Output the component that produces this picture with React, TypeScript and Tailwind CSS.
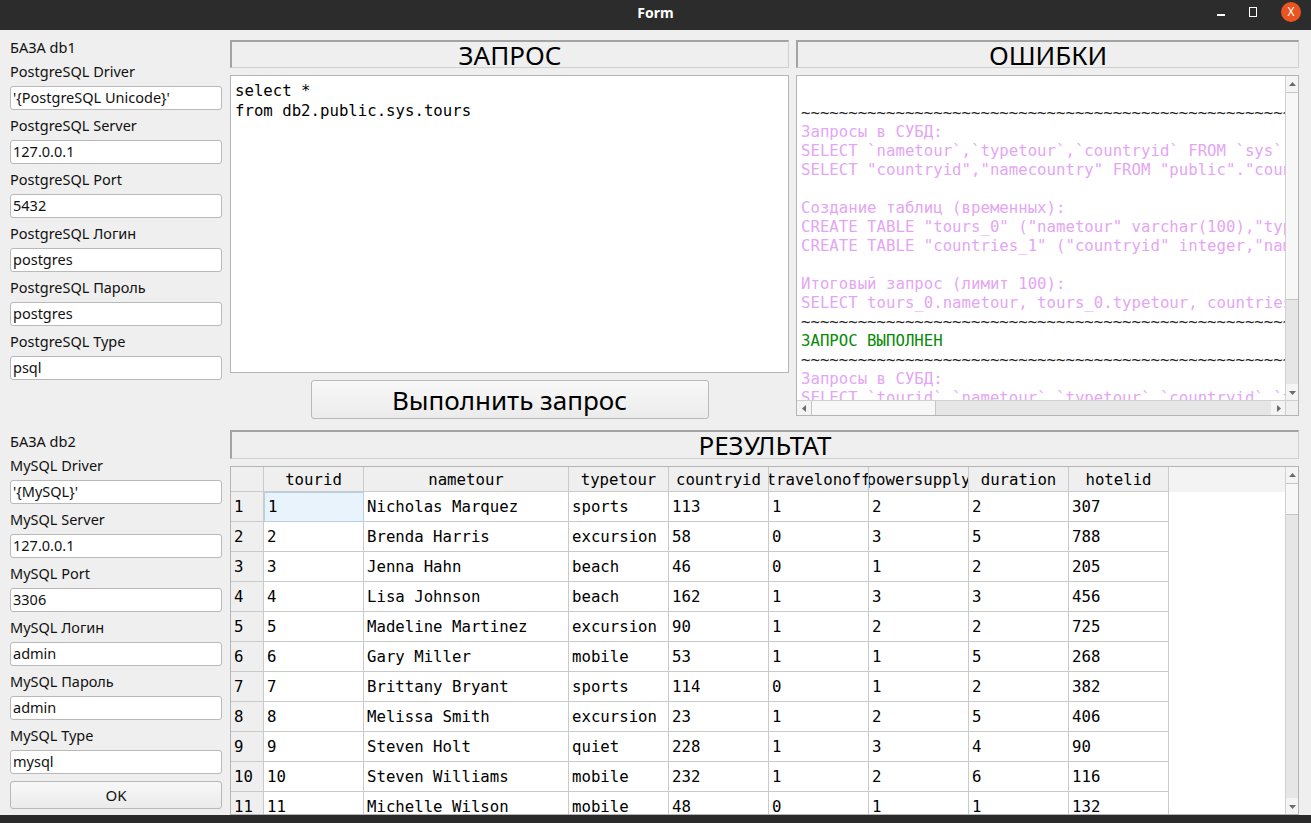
import React from "react";

const ui = "font-['Noto_Sans',sans-serif]";
const mono = "font-['DejaVu_Sans_Mono',monospace]";

type Field = { label: string; value: string };

const db1: Field[] = [
  { label: "PostgreSQL Driver", value: "'{PostgreSQL Unicode}'" },
  { label: "PostgreSQL Server", value: "127.0.0.1" },
  { label: "PostgreSQL Port", value: "5432" },
  { label: "PostgreSQL Логин", value: "postgres" },
  { label: "PostgreSQL Пароль", value: "postgres" },
  { label: "PostgreSQL Type", value: "psql" },
];

const db2: Field[] = [
  { label: "MySQL Driver", value: "'{MySQL}'" },
  { label: "MySQL Server", value: "127.0.0.1" },
  { label: "MySQL Port", value: "3306" },
  { label: "MySQL Логин", value: "admin" },
  { label: "MySQL Пароль", value: "admin" },
  { label: "MySQL Type", value: "mysql" },
];

const columns = [
  { name: "tourid", w: "w-[100px]" },
  { name: "nametour", w: "w-[205px]" },
  { name: "typetour", w: "w-[100px]" },
  { name: "countryid", w: "w-[100px]" },
  { name: "travelonoff", w: "w-[100px]" },
  { name: "powersupply", w: "w-[100px]" },
  { name: "duration", w: "w-[100px]" },
  { name: "hotelid", w: "w-[100px]" },
];

const rows: string[][] = [
  ["1", "Nicholas Marquez", "sports", "113", "1", "2", "2", "307"],
  ["2", "Brenda Harris", "excursion", "58", "0", "3", "5", "788"],
  ["3", "Jenna Hahn", "beach", "46", "0", "1", "2", "205"],
  ["4", "Lisa Johnson", "beach", "162", "1", "3", "3", "456"],
  ["5", "Madeline Martinez", "excursion", "90", "1", "2", "2", "725"],
  ["6", "Gary Miller", "mobile", "53", "1", "1", "5", "268"],
  ["7", "Brittany Bryant", "sports", "114", "0", "1", "2", "382"],
  ["8", "Melissa Smith", "excursion", "23", "1", "2", "5", "406"],
  ["9", "Steven Holt", "quiet", "228", "1", "3", "4", "90"],
  ["10", "Steven Williams", "mobile", "232", "1", "2", "6", "116"],
  ["11", "Michelle Wilson", "mobile", "48", "0", "1", "1", "132"],
];

const tildes = "~".repeat(80);

const log: { text: string; tone: "pink" | "black" | "green" }[] = [
  { text: " ", tone: "black" },
  { text: tildes, tone: "black" },
  { text: "Запросы в СУБД:", tone: "pink" },
  { text: "SELECT `nametour`,`typetour`,`countryid` FROM `sys`.`tours`", tone: "pink" },
  { text: 'SELECT "countryid","namecountry" FROM "public"."countries"', tone: "pink" },
  { text: " ", tone: "black" },
  { text: "Создание таблиц (временных):", tone: "pink" },
  { text: 'CREATE TABLE "tours_0" ("nametour" varchar(100),"typetour" varchar(100))', tone: "pink" },
  { text: 'CREATE TABLE "countries_1" ("countryid" integer,"namecountry" varchar(100))', tone: "pink" },
  { text: " ", tone: "black" },
  { text: "Итоговый запрос (лимит 100):", tone: "pink" },
  { text: "SELECT tours_0.nametour, tours_0.typetour, countries_1.namecountry FROM tours_0", tone: "pink" },
  { text: tildes, tone: "black" },
  { text: "ЗАПРОС ВЫПОЛНЕН", tone: "green" },
  { text: tildes, tone: "black" },
  { text: "Запросы в СУБД:", tone: "pink" },
  { text: "SELECT `tourid`,`nametour`,`typetour`,`countryid`,`travelonoff` FROM `sys`", tone: "pink" },
];

function Arrow({ dir }: { dir: "up" | "down" | "left" | "right" }) {
  const pts = {
    up: "1,6 4.5,2 8,6",
    down: "1,3 4.5,7 8,3",
    left: "6,1 2,4.5 6,8",
    right: "3,1 7,4.5 3,8",
  }[dir];
  return (
    <svg width="9" height="9" viewBox="0 0 9 9">
      <polygon points={pts} fill="#6b6b6b" />
    </svg>
  );
}

function FieldGroup({ title, fields }: { title: string; fields: Field[] }) {
  return (
    <div className="flex flex-col">
      <div className="flex h-[24px] items-center">{title}</div>
      {fields.map((f, i) => (
        <div key={f.label} className={i === 0 ? "flex flex-col" : "mt-[4px] flex flex-col"}>
          <div className="flex h-[24px] items-center">{f.label}</div>
          <div className="mt-[2px] flex h-[24px] items-center rounded-[3px] border border-[#b9b9b9] bg-white px-[2px]">
            {f.value}
          </div>
        </div>
      ))}
    </div>
  );
}

function Caption({ text, className }: { text: string; className?: string }) {
  return (
    <div
      className={`flex items-center justify-center border-t-2 border-l-2 border-b border-r border-t-[#a3a3a3] border-l-[#a3a3a3] border-b-[#cfcfcf] border-r-[#cfcfcf] bg-[#efefef] text-[26px] leading-none text-black ${className ?? ""}`}
    >
      {text}
    </div>
  );
}

function ErrorsPanel() {
  return (
    <div className="flex h-[341px] flex-col border border-[#b4b4b4] bg-white">
      <div className="flex min-h-0 flex-1">
        <div className={`${mono} min-w-0 flex-1 overflow-hidden whitespace-pre pl-[4px] pt-[8px] text-[15.7px] leading-[19px]`}>
          {log.map((l, i) => (
            <div
              key={i}
              className={
                l.tone === "pink" ? "text-[#e4a6f4]" : l.tone === "green" ? "text-[#078a07]" : "text-[#222222]"
              }
            >
              {l.text}
            </div>
          ))}
        </div>
        <div className="flex w-[13px] flex-col border-l border-[#d0d0d0] bg-[#e6e6e6]">
          <div className="flex h-[16px] items-center justify-center bg-[#f4f4f4]">
            <Arrow dir="up" />
          </div>
          <div className="h-[208px] border-y border-[#c6c6c6] bg-[#f7f7f7]" />
          <div className="flex-1" />
          <div className="flex h-[16px] items-center justify-center bg-[#f4f4f4]">
            <Arrow dir="down" />
          </div>
        </div>
      </div>
      <div className="flex h-[15px] border-t border-[#d0d0d0]">
        <div className="flex flex-1 bg-[#e6e6e6]">
          <div className="flex w-[14px] items-center justify-center bg-[#f4f4f4]">
            <Arrow dir="left" />
          </div>
          <div className="w-[125px] border-x border-[#c6c6c6] bg-[#f7f7f7]" />
          <div className="flex-1" />
          <div className="flex w-[14px] items-center justify-center bg-[#f4f4f4]">
            <Arrow dir="right" />
          </div>
        </div>
        <div className="w-[13px] border-l border-[#d0d0d0] bg-[#efefef]" />
      </div>
    </div>
  );
}

function ResultTable() {
  return (
    <div className={`${mono} flex min-h-0 flex-1 border border-[#b4b4b4] bg-white text-[15.7px] text-black`}>
      <div className="min-w-0 flex-1 overflow-hidden">
        <div className="flex h-[25px] bg-[#f3f3f3]">
          <div className="w-[33px] shrink-0 border-r border-b border-[#cacaca] bg-[#efefef]" />
          {columns.map((c) => (
            <div
              key={c.name}
              className={`${c.w} flex shrink-0 items-center justify-center overflow-hidden whitespace-nowrap border-r border-b border-[#cacaca] bg-[#efefef] pt-[1px]`}
            >
              {c.name}
            </div>
          ))}
        </div>
        {rows.map((r, ri) => (
          <div key={ri} className="flex h-[30px]">
            <div className="flex w-[33px] shrink-0 items-center border-r border-b border-[#cacaca] bg-[#efefef] pl-[3px]">
              {ri + 1}
            </div>
            {r.map((v, ci) => (
              <div
                key={ci}
                className={`${columns[ci].w} flex shrink-0 items-center overflow-hidden whitespace-nowrap pl-[3px] ${
                  ri === 0 && ci === 0
                    ? "border border-[#b5cfe6] bg-[#e8f3fc]"
                    : "border-r border-b border-[#cacaca]"
                }`}
              >
                {v}
              </div>
            ))}
          </div>
        ))}
      </div>
      <div className="flex w-[13px] flex-col border-l border-[#d0d0d0] bg-[#e6e6e6]">
        <div className="flex h-[16px] items-center justify-center bg-[#f4f4f4]">
          <Arrow dir="up" />
        </div>
        <div className="h-[32px] border-y border-[#c6c6c6] bg-[#f7f7f7]" />
        <div className="flex-1" />
        <div className="flex h-[16px] items-center justify-center bg-[#f4f4f4]">
          <Arrow dir="down" />
        </div>
      </div>
    </div>
  );
}

export default function App() {
  return (
    <div className={`${ui} flex h-[823px] w-[1311px] flex-col overflow-hidden bg-[#efefef] text-[14.5px] text-[#111111]`}>
      <div className="flex h-[30px] shrink-0 items-start bg-[#2c2c2c] pt-[2px] text-white">
        <div className="w-[200px]" />
        <div className="flex h-[20px] flex-1 items-center justify-center text-[14px] font-bold">Form</div>
        <div className="flex h-[20px] w-[200px] items-center justify-end gap-[24px] pr-[10px]">
          <div className="mt-[6px] h-[2px] w-[8px] bg-white" />
          <div className="h-[10px] w-[8px] border border-white" />
          <div className="flex h-[20px] w-[20px] items-center justify-center rounded-full bg-[#e95420] text-[12px] leading-none">
            X
          </div>
        </div>
      </div>

      <div className="flex min-h-0 flex-1">
        <div className="ml-[10px] flex w-[212px] shrink-0 flex-col pt-[6px]">
          <FieldGroup title="БАЗА db1" fields={db1} />
          <div className="h-[50px]" />
          <FieldGroup title="БАЗА db2" fields={db2} />
          <button className="mt-[7px] flex h-[28px] items-center justify-center rounded-[3px] border border-[#b9b9b9] bg-gradient-to-b from-[#f8f8f8] to-[#ebebeb] pt-[1px] text-[15px]">
            OK
          </button>
        </div>

        <div className="ml-[8px] mr-[12px] flex min-w-0 flex-1 flex-col pt-[10px] pb-0">
          <div className="flex h-[379px] gap-[7px]">
            <div className="flex w-[559px] flex-col">
              <Caption text="ЗАПРОС" className="h-[28px]" />
              <div className={`${mono} mt-[7px] h-[298px] border border-[#b4b4b4] bg-white pl-[4px] pt-[5px] text-[15.7px] leading-[20px] whitespace-pre text-black`}>
                {"select *\nfrom db2.public.sys.tours"}
              </div>
              <div className="mt-[7px] flex justify-center">
                <button className="flex h-[39px] w-[398px] items-center justify-center rounded-[3px] border border-[#b9b9b9] bg-gradient-to-b from-[#f8f8f8] to-[#ebebeb] text-[26px] leading-none text-black">
                  Выполнить запрос
                </button>
              </div>
            </div>
            <div className="flex min-w-0 flex-1 flex-col">
              <Caption text="ОШИБКИ" className="h-[28px]" />
              <div className="mt-[7px]">
                <ErrorsPanel />
              </div>
            </div>
          </div>
          <Caption text="РЕЗУЛЬТАТ" className="mt-[11px] h-[29px] shrink-0" />
          <div className="mt-[7px] flex min-h-0 flex-1 flex-col">
            <ResultTable />
          </div>
        </div>
      </div>

      <div className="h-[8px] shrink-0 bg-[#2a2a2a]" />
    </div>
  );
}
